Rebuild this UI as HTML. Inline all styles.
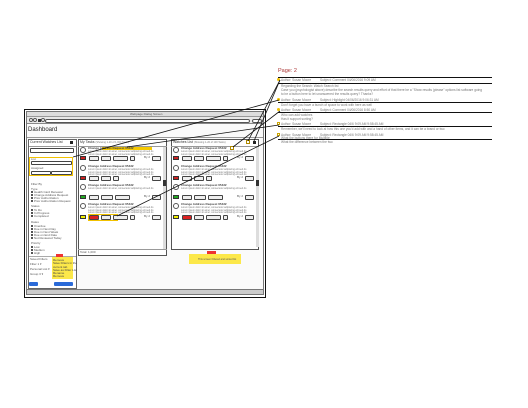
<!DOCTYPE html>
<html><head><meta charset="utf-8"><style>
*{margin:0;padding:0;box-sizing:border-box}
body{width:528px;height:408px;background:#fff;position:relative;overflow:hidden;font-family:"Liberation Sans",sans-serif}
div{position:absolute}
.t{font-size:3px;color:#555;white-space:nowrap;line-height:3px}
.b{border:0.6px solid #444;background:#eee;border-radius:1px;height:5px}
.c{width:6px;height:6px;border:0.7px solid #555;border-radius:50%;background:#fff}
.ln{height:1px;background:#111;left:278px;width:214px}
.at{font-size:3.2px;color:#777;white-space:nowrap;line-height:3px;left:281px}
.cb{width:2px;height:2px;border:0.4px solid #555;background:#fff}
</style></head><body>
<div style="left:24px;top:109px;width:242px;height:189px;border:1.5px solid #111;background:#fff"></div>
<div style="left:26px;top:111px;width:238px;height:184px;border:0.8px solid #777;background:#f6f6f6"></div>
<div style="left:27px;top:112px;width:236px;height:5px;background:#ddd;border-bottom:0.5px solid #999"></div>
<div class="t" style="left:130px;top:113px">Webpage Dialog Screen</div>
<div style="left:27px;top:117px;width:236px;height:7px;background:#e8e8e8;border-bottom:0.6px solid #888"></div>
<div class="c" style="left:29px;top:118px;width:4px;height:4px"></div>
<div class="c" style="left:33px;top:118px;width:4px;height:4px"></div>
<div style="left:38px;top:118.5px;width:3px;height:3px;background:#333"></div>
<div class="c" style="left:41px;top:118px;width:4px;height:4px"></div>
<div style="left:45px;top:118.5px;width:205px;height:4px;border:0.6px solid #555;border-radius:2px;background:#fff"></div>
<div style="left:252px;top:118.5px;width:10px;height:4px;border:0.6px solid #555;border-radius:2px;background:#fff"></div>
<div style="left:27px;top:124px;width:236px;height:166px;background:#fafafa"></div>
<div style="left:28px;top:127px;font-size:6px;color:#222">Dashboard</div>
<div style="left:27px;top:137px;width:236px;height:0.6px;background:#999"></div>
<div style="left:27px;top:289px;width:236px;height:5px;background:#ccc;border-top:0.6px solid #777"></div>

<div style="left:28px;top:139px;width:49px;height:150px;border:0.7px solid #666;background:#fff"></div>
<div class="t" style="left:30px;top:141px;font-size:3.5px;color:#333">Current Watches List</div>
<div style="left:70px;top:141px;width:3px;height:3px;background:#222"></div>
<div style="left:29px;top:146px;width:47px;height:0.5px;background:#999"></div>
<div class="b" style="left:30px;top:148px;width:44px;height:5px;background:#fff"></div>
<div style="left:29px;top:157px;width:44px;height:19px;border:1px solid #f2c200"></div>
<div class="t" style="left:31px;top:158px">List</div>
<div class="b" style="left:31px;top:161px;width:41px;height:4px;background:#fff"></div>
<div class="t" style="left:31px;top:167px">Assigned</div>
<div class="b" style="left:31px;top:171px;width:20px;height:4px;background:#fff"></div>
<div class="b" style="left:51px;top:171px;width:21px;height:4px;background:#fff"></div>
<div class="t" style="left:31px;top:183px">Filter By</div>
<div class="t" style="left:31px;top:188px">Type</div>
<div class="cb" style="left:31px;top:191px"></div><div class="t" style="left:34px;top:191px">Health Card Renewal</div>
<div class="cb" style="left:31px;top:194px"></div><div class="t" style="left:34px;top:194px">Change Address Request</div>
<div class="cb" style="left:31px;top:197px"></div><div class="t" style="left:34px;top:197px">Prior Authorization</div>
<div class="cb" style="left:31px;top:200px"></div><div class="t" style="left:34px;top:200px">Prior Authorization Request</div>
<div class="t" style="left:31px;top:205px">Status</div>
<div class="cb" style="left:31px;top:209px"></div><div class="t" style="left:34px;top:209px">To Do</div>
<div class="cb" style="left:31px;top:212px"></div><div class="t" style="left:34px;top:212px">In Progress</div>
<div class="cb" style="left:31px;top:215px"></div><div class="t" style="left:34px;top:215px">Completed</div>
<div class="t" style="left:31px;top:221px">Dates</div>
<div class="cb" style="left:31px;top:225px"></div><div class="t" style="left:34px;top:225px">Overdue</div>
<div class="cb" style="left:31px;top:228px"></div><div class="t" style="left:34px;top:228px">Due in Next Day</div>
<div class="cb" style="left:31px;top:231px"></div><div class="t" style="left:34px;top:231px">Due in Next Week</div>
<div class="cb" style="left:31px;top:234px"></div><div class="t" style="left:34px;top:234px">Due on End Date</div>
<div class="cb" style="left:31px;top:237px"></div><div class="t" style="left:34px;top:237px">Not Reviewed Today</div>
<div class="t" style="left:31px;top:242px">Priority</div>
<div class="cb" style="left:31px;top:246px"></div><div class="t" style="left:34px;top:246px">Low</div>
<div class="cb" style="left:31px;top:249px"></div><div class="t" style="left:34px;top:249px">Medium</div>
<div class="cb" style="left:31px;top:252px"></div><div class="t" style="left:34px;top:252px">High</div>
<div style="left:29px;top:256px;width:47px;height:0.5px;background:#aaa"></div>
<div class="t" style="left:30px;top:258px">Saved Filters</div>
<div class="t" style="left:30px;top:263px">Filter 1 ▾</div>
<div class="t" style="left:30px;top:268px">Personal List ▾</div>
<div class="t" style="left:30px;top:273px">Group 3 ▾</div>
<div style="left:52px;top:257px;width:21px;height:22px;background:#fce84a"></div>
<div style="left:56px;top:254px;width:7px;height:3px;background:#e33"></div>
<div class="t" style="left:53px;top:259px;line-height:3.3px;color:#444">Remove<br>Save Filters in the<br>current tab<br>Save as Filter List<br>Rename<br>Remove</div>
<div style="left:29px;top:282px;width:9px;height:4px;background:#2a6ad8;border-radius:1px"></div>
<div style="left:54px;top:282px;width:19px;height:4px;background:#2a6ad8;border-radius:1px"></div>

<div style="left:78px;top:139px;width:89px;height:117px;border:0.8px solid #555;background:#fff"></div>
<div class="t" style="left:80px;top:141px;font-size:3.5px;color:#333">My Tasks <span style="font-size:2.5px;color:#777">(Showing 1-20 of 1,000 Tasks)</span></div>
<div style="left:78px;top:146px;width:89px;height:0.5px;background:#999"></div>
<div style="left:163px;top:147px;width:2.5px;height:103px;background:#ddd"></div>
<div style="left:163px;top:180px;width:2.5px;height:6px;background:#333"></div>
<div style="left:78px;top:249px;width:89px;height:0.5px;background:#999"></div>
<div class="t" style="left:80px;top:251px">Total: 1,000</div>

<div style="left:171px;top:139px;width:88px;height:111px;border:0.8px solid #555;background:#fff"></div>
<div class="t" style="left:173px;top:141px;font-size:3.5px;color:#333">Watches List <span style="font-size:2.5px;color:#777">(Showing 1-20 of 100 Tasks)</span></div>
<div style="left:246px;top:140px;width:4px;height:4px;border:0.8px solid #b08a00"></div>
<div style="left:253px;top:141px;width:3px;height:3px;background:#222"></div>
<div style="left:171px;top:146px;width:88px;height:0.5px;background:#999"></div>
<div style="left:256px;top:147px;width:2.5px;height:100px;background:#ddd"></div>
<div style="left:256px;top:180px;width:2.5px;height:6px;background:#333"></div>
<div style="left:230px;top:146px;width:4px;height:4px;border:0.8px solid #b08a00;background:#fff"></div>

<div style="left:102px;top:147px;width:50px;height:3px;background:#f5c800"></div>
<div style="left:88px;top:214px;width:30px;height:7px;border:0.8px solid #f2c200"></div>

<div id="items"></div>

<div style="left:189px;top:254px;width:52px;height:10px;background:#fce84a"></div>
<div style="left:207px;top:251px;width:9px;height:3px;background:#e33"></div>
<div class="t" style="left:198px;top:258px;font-size:2.5px">This screen Filtered and sorted list</div>

<div style="left:278px;top:68px;font-size:5.5px;color:#a33">Page: 2</div>
<div class="ln" style="top:77px"></div>
<div class="ln" style="top:83px"></div>
<div class="ln" style="top:102px"></div>
<div class="ln" style="top:112px"></div>
<div class="ln" style="top:126px"></div>
<div class="ln" style="top:139px"></div>
<div class="at" style="top:78.5px">Author: Susan Moore&nbsp;&nbsp;&nbsp;&nbsp;&nbsp;&nbsp;&nbsp;&nbsp;&nbsp;&nbsp;Subject: Comment 04/06/2016 9:09 AM</div>
<div class="at" style="top:84.5px">Regarding the Search: Watch Search list</div>
<div class="at" style="top:88.5px">Case you (psychologist above) describe the search results query and effort of that there be a "Show results (please" options list software going</div>
<div class="at" style="top:92.5px">to be a button here to let unanswered the results query? Thanks?</div>
<div class="at" style="top:98.5px">Author: Susan Moore&nbsp;&nbsp;&nbsp;&nbsp;&nbsp;&nbsp;&nbsp;&nbsp;&nbsp;&nbsp;Subject: Highlight 04/06/2016 9:06:31 AM</div>
<div class="at" style="top:103.5px">Don't forget you have a bunch of space to work with here as well</div>
<div class="at" style="top:108.5px">Author: Susan Moore&nbsp;&nbsp;&nbsp;&nbsp;&nbsp;&nbsp;&nbsp;&nbsp;&nbsp;&nbsp;Subject: Comment 04/06/2016 8:50 AM</div>
<div class="at" style="top:113.5px">Who can add watches</div>
<div class="at" style="top:117.5px">Has it support sorting?</div>
<div class="at" style="top:122.5px">Author: Susan Moore&nbsp;&nbsp;&nbsp;&nbsp;&nbsp;&nbsp;&nbsp;&nbsp;&nbsp;&nbsp;Subject: Rectangle 04/6 9:09 AM 9:58:45 AM</div>
<div class="at" style="top:127.5px">Remember, we'll need to look at how this one you'd add with and a hand of other items, and it can be a brand or two</div>
<div class="at" style="top:133.5px">Author: Susan Moore&nbsp;&nbsp;&nbsp;&nbsp;&nbsp;&nbsp;&nbsp;&nbsp;&nbsp;&nbsp;Subject: Rectangle 04/6 9:09 AM 9:58:45 AM</div>
<div class="at" style="top:136.5px">What the buttons there for Multiple</div>
<div class="at" style="top:140.5px">What the difference between the two</div>
<div style="left:277px;top:78px;width:3px;height:3px;border-radius:50%;background:#f2c200"></div>
<div style="left:277px;top:98px;width:3px;height:3px;border-radius:50%;background:#f2c200"></div>
<div style="left:277px;top:108px;width:3px;height:3px;border-radius:50%;background:#f2c200"></div>
<div style="left:277px;top:122px;width:3px;height:3px;border:0.5px solid #c9a300"></div>
<div style="left:277px;top:133px;width:3px;height:3px;border:0.5px solid #c9a300"></div>

<svg width="528" height="408" style="position:absolute;left:0;top:0" stroke="#111" stroke-width="0.8" fill="none">
<line x1="73" y1="157" x2="279" y2="100"/>
<line x1="280" y1="80" x2="248" y2="141"/>
<line x1="280" y1="80" x2="254" y2="141"/>
<line x1="280" y1="111" x2="233" y2="147"/>
<line x1="127" y1="147" x2="279" y2="125"/>
<line x1="117" y1="216" x2="279" y2="136"/>
</svg>

<script>
var h='';
function item(x,y,col,btns,desc,off){
 h+='<div class="c" style="left:'+(x+2)+'px;top:'+y+'px"></div>';
 h+='<div class="t" style="left:'+(x+10)+'px;top:'+(y)+'px;color:#444;font-weight:bold">Change Address Request 65432</div>';
 for(var i=0;i<desc;i++)h+='<div class="t" style="left:'+(x+10)+'px;top:'+(y+3+i*2.5)+'px;font-size:2.4px;color:#777">Lorem ipsum dolor sit amet, consectetur adipiscing elit sed do</div>';
 var by=y+off;
 h+='<div style="left:'+(x+2)+'px;top:'+by+'px;width:6px;height:4px;background:'+col+';border:0.5px solid #333"></div>';
 var bx=x+11;
 btns.forEach(function(w,i){var bg=(col=='#ee0'&&i==0)?'#d22':'#eee';h+='<div class="b" style="left:'+bx+'px;top:'+(by-0.5)+'px;width:'+w+'px;background:'+bg+'"></div>';bx+=w+2;});
 h+='<div class="b" style="left:'+(x+74)+'px;top:'+(by-0.5)+'px;width:9px"></div>';
 h+='<div class="t" style="left:'+(x+66)+'px;top:'+by+'px">By 2</div>';
}
[78,171].forEach(function(x){
 item(x,147,'#c22',[10,10,15,5],2,9);
 item(x,165,'#c22',[10,10,6],3,11);
 item(x,184,'#2a2',[10,12,15],1,11);
 item(x,203,'#ee0',[10,10,15,5],3,12);
});
document.getElementById('items').outerHTML=h;
</script>
</body></html>
